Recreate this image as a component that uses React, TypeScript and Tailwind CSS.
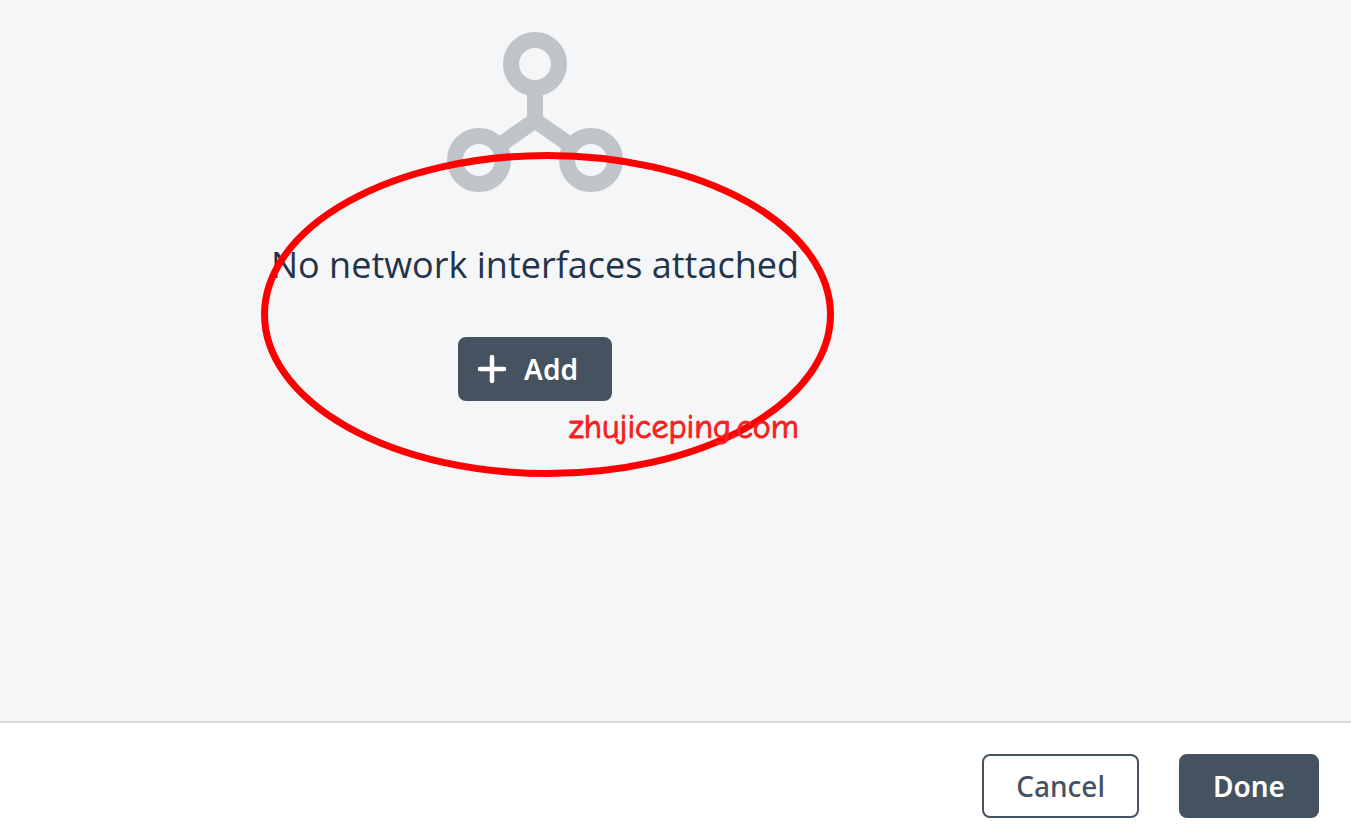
import React from "react";

const NetworkIcon = () => (
  <svg width="176" height="160" viewBox="0 0 176 160" fill="none" aria-hidden="true">
    <g stroke="#c0c3c8" strokeWidth="16">
      <circle cx="88" cy="32" r="24" />
      <circle cx="32" cy="128" r="24" />
      <circle cx="144" cy="128" r="24" />
      <path d="M88 54V90M50 115L88 88.5L126 115" />
    </g>
  </svg>
);

const PlusIcon = () => (
  <svg width="32" height="32" viewBox="0 0 32 32" fill="none" aria-hidden="true">
    <path d="M16 4V28M4 16H28" stroke="white" strokeWidth="4.5" strokeLinecap="round" />
  </svg>
);

// hand-drawn style circle and site name laid over the empty state
const Annotation = () => (
  <div className="pointer-events-none absolute left-1/2 top-[152px] ml-[-274px] h-[325px] w-[573px]">
    <svg width="573" height="325" viewBox="0 0 573 325" fill="none" aria-hidden="true">
      <ellipse cx="286.5" cy="162.5" rx="283" ry="159" stroke="#ff0000" strokeWidth="7" />
    </svg>
    <span className="absolute left-[308px] top-[253px] whitespace-nowrap font-['Comic_Sans_MS','Comic_Neue','Lato',sans-serif] text-[34px] leading-[44px] text-[#fa1e1e] [-webkit-text-stroke:1px_#fa1e1e]">
      zhujiceping.com
    </span>
  </div>
);

const App = () => {
  return (
    <div className="flex min-h-screen flex-col bg-[#f4f6f8] font-['Noto_Sans','Open_Sans',sans-serif]">
      <main className="flex-1">
        <section className="relative flex w-full max-w-[1070px] flex-col items-center pt-8">
          <NetworkIcon />
          <h2 className="mt-12 text-center font-['Open_Sans',sans-serif] text-[36px] leading-[49px] text-[#243347]">
            No network interfaces attached
          </h2>
          <button
            type="button"
            className="mt-12 flex h-16 items-center gap-4 rounded-lg border-2 border-[#45525f] bg-[#45525f] pl-4 pr-8 text-[28px] font-semibold text-white"
          >
            <PlusIcon />
            Add
          </button>
          <Annotation />
        </section>
      </main>
      <footer className="flex justify-end gap-10 border-t-2 border-[#d8dde0] bg-white px-8 pb-[22px] pt-[31px]">
        <button
          type="button"
          className="h-16 rounded-lg border-2 border-[#45525f] bg-white px-8 text-[28px] font-medium text-[#45525f]"
        >
          Cancel
        </button>
        <button
          type="button"
          className="h-16 rounded-lg border-2 border-[#45525f] bg-[#45525f] px-8 text-[28px] font-semibold text-white"
        >
          Done
        </button>
      </footer>
    </div>
  );
};

export default App;
